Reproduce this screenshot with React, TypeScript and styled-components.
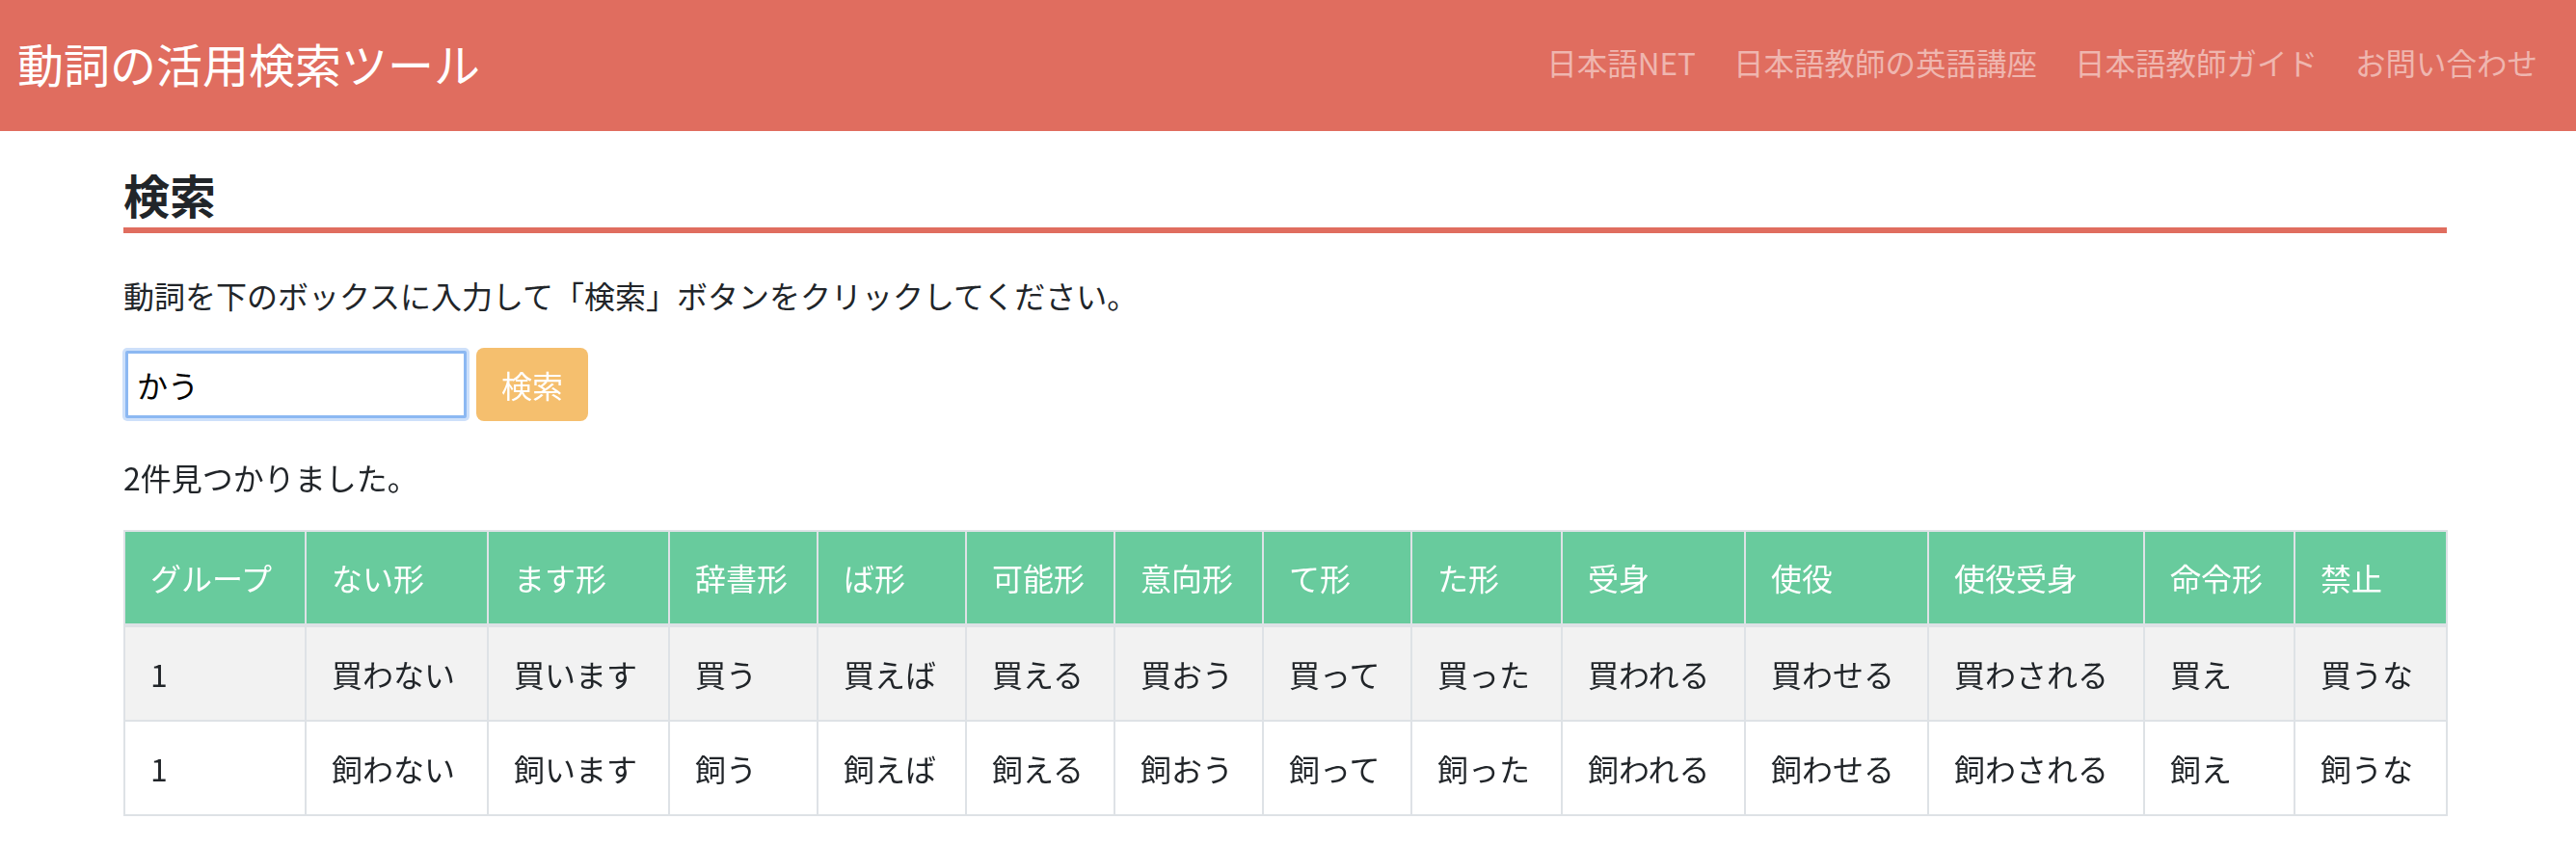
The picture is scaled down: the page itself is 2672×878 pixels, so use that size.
import React, { useEffect, useRef } from "react";
import styled, { createGlobalStyle } from "styled-components";

const GlobalStyle = createGlobalStyle`
  html, body {
    margin: 0;
    padding: 0;
    background: #ffffff;
  }
  body {
    font-family: "Noto Sans CJK JP", "Noto Sans", sans-serif;
    color: #212529;
  }
  * { box-sizing: border-box; }
`;

const Header = styled.header`
  height: 136px;
  background: #e06d5f;
  display: flex;
  align-items: center;
  justify-content: space-between;
  padding: 0 40px 0 18px;
`;

const Brand = styled.div`
  color: #ffffff;
  font-size: 48px;
  line-height: 60px;
  font-weight: 400;
  margin-top: -6px;
`;

const Nav = styled.nav`
  display: flex;
  gap: 39px;
  margin-top: -8px;
`;

const NavLink = styled.a`
  color: rgba(255, 255, 255, 0.5);
  font-size: 31.5px;
  line-height: 48px;
  text-decoration: none;
`;

const Main = styled.main`
  width: 2410px;
  margin-left: 128px;
`;

const SectionTitle = styled.h2`
  margin: 36px 0 0;
  font-size: 48px;
  line-height: 58px;
  font-weight: 700;
  padding-bottom: 6px;
  border-bottom: 6px solid #e06d5f;
`;

const Lead = styled.p`
  margin: 40px 0 0;
  font-size: 32px;
  line-height: 48px;
`;

const SearchRow = styled.form`
  margin-top: 31px;
  height: 76px;
  display: flex;
  align-items: center;
  gap: 10px;
  padding-left: 2px;
`;

const SearchInput = styled.input`
  width: 354px;
  height: 70px;
  border: 3px solid #8cb8f2;
  box-shadow: 0 0 0 3px #cde0fa;
  border-radius: 2px;
  padding: 0 9px;
  font-family: inherit;
  font-size: 32px;
  color: #000;
  caret-color: #000;
  outline: none;
  background: #fff;
`;

const SearchButton = styled.button`
  height: 76px;
  padding: 0 26px;
  border: none;
  border-radius: 8px;
  background: #f5bf6e;
  color: #ffffff;
  font-family: inherit;
  font-size: 32px;
  line-height: 48px;
  cursor: pointer;
`;

const Result = styled.p`
  margin: 34px 0 0;
  font-size: 32px;
  line-height: 48px;
`;

const Table = styled.table`
  margin-top: 31px;
  width: 2409px;
  table-layout: fixed;
  border-collapse: collapse;
  border: 2px solid #dee2e6;
`;

const HeadCell = styled.th`
  background: #68cb9d;
  color: #ffffff;
  font-weight: 400;
  font-size: 32px;
  line-height: 47px;
  text-align: left;
  padding: 24px 26px;
  border: 2px solid #dee2e6;
  border-bottom-width: 4px;
  white-space: nowrap;
`;

const Row = styled.tr<{ $striped: boolean }>`
  background: ${(p) => (p.$striped ? "#f2f2f2" : "#ffffff")};
`;

const Cell = styled.td`
  font-size: 32px;
  line-height: 48px;
  padding: 24px 26px;
  border: 2px solid #dee2e6;
  white-space: nowrap;
`;

const headers = [
  "グループ",
  "ない形",
  "ます形",
  "辞書形",
  "ば形",
  "可能形",
  "意向形",
  "て形",
  "た形",
  "受身",
  "使役",
  "使役受身",
  "命令形",
  "禁止",
];

const widths = [188, 189, 188, 154, 154, 154, 154, 154, 156, 190, 190, 224, 156, 158];

const rows = [
  ["1", "買わない", "買います", "買う", "買えば", "買える", "買おう", "買って", "買った", "買われる", "買わせる", "買わされる", "買え", "買うな"],
  ["1", "飼わない", "飼います", "飼う", "飼えば", "飼える", "飼おう", "飼って", "飼った", "飼われる", "飼わせる", "飼わされる", "飼え", "飼うな"],
];

const links = ["日本語NET", "日本語教師の英語講座", "日本語教師ガイド", "お問い合わせ"];

export default function App() {
  const inputRef = useRef<HTMLInputElement>(null);
  useEffect(() => {
    const el = inputRef.current;
    if (el) {
      el.focus();
      el.setSelectionRange(el.value.length, el.value.length);
    }
  }, []);

  return (
    <>
      <GlobalStyle />
      <Header>
        <Brand>動詞の活用検索ツール</Brand>
        <Nav>
          {links.map((l) => (
            <NavLink key={l} href="#">
              {l}
            </NavLink>
          ))}
        </Nav>
      </Header>
      <Main>
        <SectionTitle>検索</SectionTitle>
        <Lead>動詞を下のボックスに入力して「検索」ボタンをクリックしてください。</Lead>
        <SearchRow onSubmit={(e) => e.preventDefault()}>
          <SearchInput ref={inputRef} defaultValue="かう" />
          <SearchButton type="submit">検索</SearchButton>
        </SearchRow>
        <Result>2件見つかりました。</Result>
        <Table>
          <colgroup>
            {widths.map((w, i) => (
              <col key={i} style={{ width: w }} />
            ))}
          </colgroup>
          <thead>
            <tr>
              {headers.map((h) => (
                <HeadCell key={h}>{h}</HeadCell>
              ))}
            </tr>
          </thead>
          <tbody>
            {rows.map((r, ri) => (
              <Row key={ri} $striped={ri === 0}>
                {r.map((c, ci) => (
                  <Cell key={ci}>{c}</Cell>
                ))}
              </Row>
            ))}
          </tbody>
        </Table>
      </Main>
    </>
  );
}
